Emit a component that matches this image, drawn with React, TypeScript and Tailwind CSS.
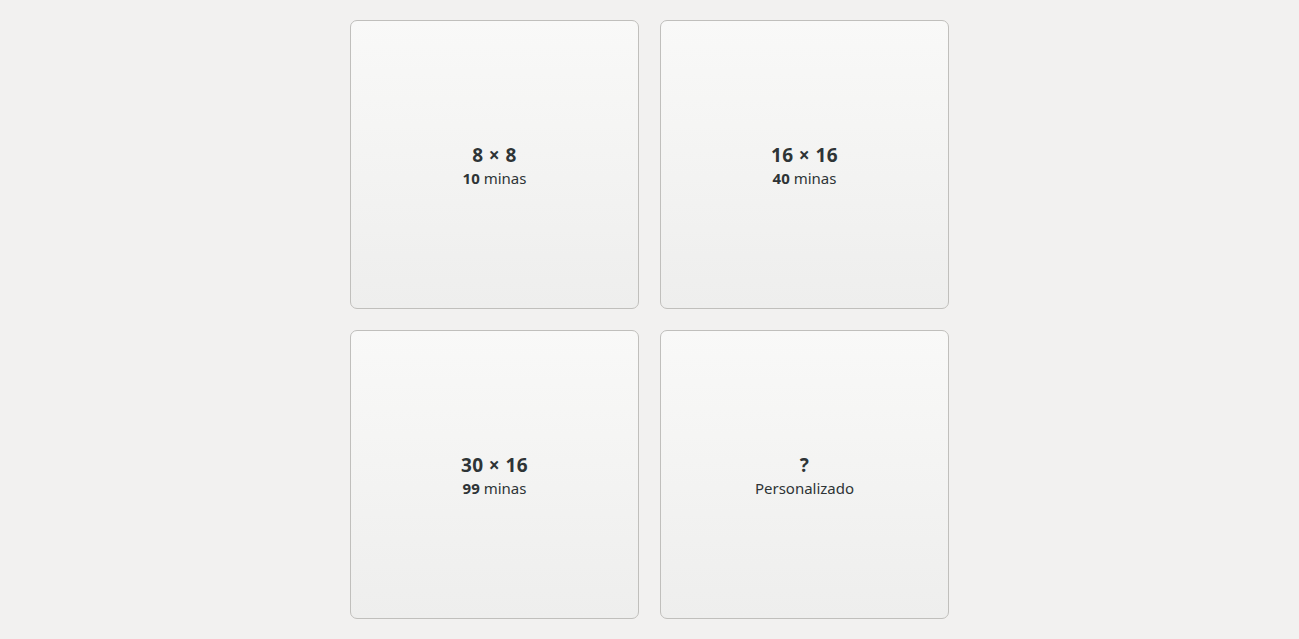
import React from 'react';

interface Preset {
  title: string;
  count?: number;
  label: string;
}

const presets: Preset[] = [
  { title: '8 × 8', count: 10, label: 'minas' },
  { title: '16 × 16', count: 40, label: 'minas' },
  { title: '30 × 16', count: 99, label: 'minas' },
  { title: '?', label: 'Personalizado' },
];

const PresetButton: React.FC<{ preset: Preset }> = ({ preset }) => (
  <button className="w-[289px] h-[289px] flex flex-col items-center justify-center pt-[2px] rounded-[7px] border border-[#c0bfbc] bg-gradient-to-b from-[#f9f9f8] to-[#eeeeed] text-[#2e3436]">
    <span className="text-[19px] leading-[26px] font-bold tracking-[0.4px]">{preset.title}</span>
    <span className="text-[15px] leading-[21px]">
      {preset.count !== undefined && <b className="font-bold">{preset.count} </b>}
      {preset.label}
    </span>
  </button>
);

export default function App() {
  return (
    <div className="min-h-screen w-full bg-[#f2f1f0] flex justify-center items-start pt-5 font-['Noto_Sans',sans-serif]">
      <div className="grid grid-cols-[289px_289px] gap-[21px]">
        {presets.map((p) => (
          <PresetButton key={p.title} preset={p} />
        ))}
      </div>
    </div>
  );
}
